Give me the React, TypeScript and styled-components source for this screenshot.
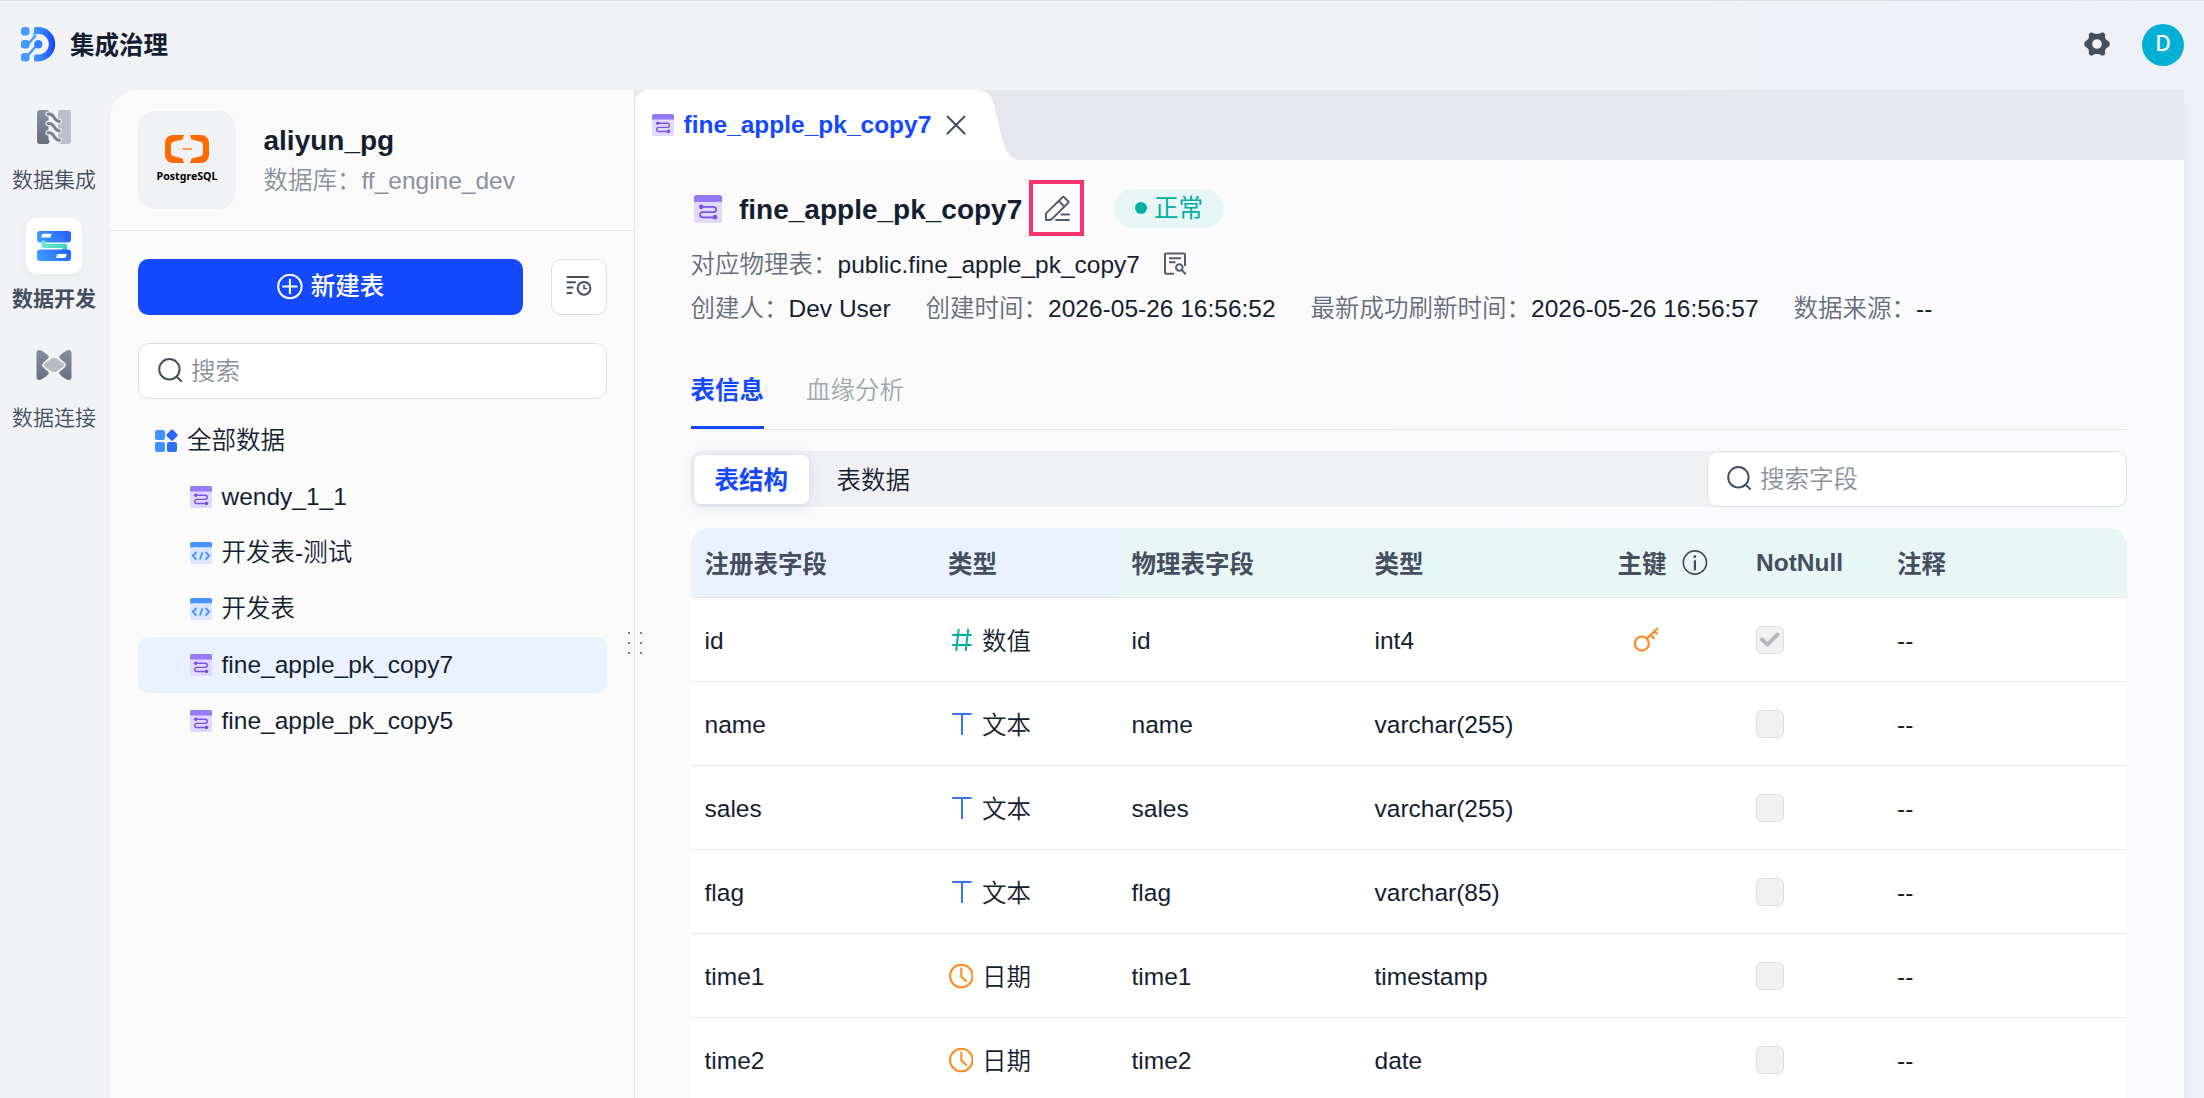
import React from 'react';
import styled, { createGlobalStyle, css } from 'styled-components';

const Global = createGlobalStyle`
  * { box-sizing: border-box; }
  html, body { margin: 0; padding: 0; }
  body {
    width: 2204px;
    height: 1098px;
    overflow: hidden;
    font-family: "Liberation Sans", "Noto Sans CJK SC", sans-serif;
    font-size: 24.5px;
    font-weight: 350;
    color: #141e31;
  }
  svg { display: block; flex: none; }
`;

const Page = styled.div`
  width: 2204px;
  height: 1098px;
  display: flex;
  flex-direction: column;
  overflow: hidden;
  border-top: 1px solid #e0e2e5;
  background: linear-gradient(90deg, #f1f3f7 0%, #f1f3f7 75%, #eef0f8 96%, #edf1f8 100%);
`;

const TopBar = styled.header`
  flex: none;
  height: 89px;
  padding: 0 20px 3px 20px;
  display: flex;
  align-items: center;
`;

const Brand = styled.div`
  margin-left: 14px;
  padding-top: 4px;
  font-weight: 700;
  line-height: 36px;
`;

const TopActions = styled.div`
  margin-left: auto;
  display: flex;
  align-items: center;
  gap: 32px;
`;

const Avatar = styled.div`
  width: 42px;
  height: 42px;
  margin-top: 1px;
  border-radius: 50%;
  background: #00b0d4;
  color: #fff;
  font: 500 21px/40px Inter, "Liberation Sans", sans-serif;
  text-align: center;
`;

const Body = styled.div`
  flex: 1;
  min-height: 0;
  display: flex;
`;

const Nav = styled.nav`
  width: 110px;
  padding: 9px 2px 0 0;
  display: flex;
  flex-direction: column;
  align-items: center;
  gap: 14px;
`;

const NavItem = styled.div`
  display: flex;
  flex-direction: column;
  align-items: center;
`;

const NavIcon = styled.div<{ $active?: boolean }>`
  width: 56px;
  height: 56px;
  border-radius: 10.5px;
  display: grid;
  place-items: center;
  ${p => p.$active && css`
    background: #fff;
    box-shadow: 0 2px 8px rgba(30, 50, 90, 0.05);
  `}
`;

const NavLabel = styled.div<{ $active?: boolean }>`
  height: 49px;
  font-size: 21px;
  line-height: 50px;
  color: #454e5f;
  font-weight: ${p => (p.$active ? 700 : 350)};
`;

const Side = styled.aside`
  position: relative;
  width: 525px;
  flex: none;
  background: #fbfbfc;
  border-top-left-radius: 28px;
  border-right: 1px solid #e3e5ee;
`;

const Handle = styled.div`
  position: absolute;
  left: 518px;
  top: 542px;
  display: grid;
  grid-template-columns: 2px 2px;
  column-gap: 10px;
  row-gap: 7.5px;
  z-index: 2;
`;

const HandleDot = styled.i`
  width: 2.4px;
  height: 2.4px;
  border-radius: 50%;
  background: #4b5363;
`;

const SourceHead = styled.div`
  height: 141px;
  padding: 21px 28px;
  display: flex;
  border-bottom: 1px solid #e3e5ee;
`;

const SourceLogo = styled.div`
  width: 98px;
  height: 98px;
  border-radius: 17.5px;
  background: #f0f2f6;
  display: flex;
  flex-direction: column;
  align-items: center;
  padding-top: 24px;
`;

const SourceLogoName = styled.div`
  margin-top: 5px;
  font: 700 10.6px/17px "Noto Sans", "Open Sans", sans-serif;
  color: #000;
`;

const SourceText = styled.div`
  margin-left: 27.5px;
  padding-top: 11px;
`;

const SourceName = styled.div`
  font-size: 28px;
  line-height: 38px;
  font-weight: 700;
`;

const SourceDb = styled.div`
  line-height: 42px;
  color: #8b919c;
`;

const SideTools = styled.div`
  padding: 28px 27px 0 28px;
  display: flex;
  justify-content: space-between;
`;

const NewButton = styled.div`
  width: 385px;
  height: 56px;
  border-radius: 10.5px;
  background: #1549ff;
  color: #fff;
  font-weight: 500;
  line-height: 52px;
  display: flex;
  align-items: center;
  justify-content: center;
  gap: 8px;
  span { padding-bottom: 1px; }
`;

const SquareButton = styled.div`
  width: 56px;
  height: 56px;
  padding-bottom: 2px;
  border: 1px solid #dadde5;
  border-radius: 10.5px;
  background: #fff;
  display: grid;
  place-items: center;
`;

const SearchBox = styled.div<{ $width: number }>`
  width: ${p => p.$width}px;
  height: 56px;
  padding-left: 17.5px;
  border: 1px solid #dadfe7;
  border-radius: 10.5px;
  background: #fff;
  color: #8b919c;
  display: flex;
  align-items: center;
  gap: 8.5px;
  span { padding-top: 1px; line-height: 36px; }
`;

const SideSearch = styled.div`
  padding: 28px 0 0 28px;
`;

const Tree = styled.div`
  padding: 14px 27px 0 28px;
`;

const TreeRow = styled.div<{ $level: number; $active?: boolean }>`
  height: 56px;
  padding-left: ${p => (p.$level ? 52 : 17)}px;
  border-radius: 10.5px;
  display: flex;
  align-items: center;
  gap: ${p => (p.$level ? 9.5 : 8)}px;
  background: ${p => (p.$active ? '#eaf2ff' : 'transparent')};
`;

const TreeName = styled.span<{ $lift?: boolean }>`
  line-height: 36px;
  padding-bottom: ${p => (p.$lift ? 1 : 0)}px;
`;

const Main = styled.main`
  width: 1549px;
  flex: none;
  display: flex;
  flex-direction: column;
  background: linear-gradient(90deg, #fbfbfc 0%, #fbfbfd 60%, #fafbfd 100%);
  box-shadow: 0 14px 12px rgba(40, 60, 100, 0.04);
`;

const TabBar = styled.div`
  height: 70px;
  flex: none;
  display: flex;
  background: #e6e8ed;
`;

const Tab = styled.div`
  width: 335px;
  padding-left: 17px;
  display: flex;
  align-items: center;
  background: #fff;
  border-top-left-radius: 13px;
`;

const TabName = styled.div`
  margin: 0 15px 0 9.5px;
  line-height: 32px;
  padding-bottom: 1px;
  font-weight: 700;
  color: #1549ff;
`;

const Content = styled.div`
  padding: 20px 57px 0 55.5px;
`;

const TitleRow = styled.div`
  display: flex;
  align-items: center;
  height: 56px;
`;

const TitleIcon = styled.div`
  padding: 2px 0 0 3.5px;
`;

const Title = styled.div`
  margin-left: 17px;
  padding-top: 3px;
  width: 290px;
  font-size: 28px;
  line-height: 53px;
  font-weight: 700;
`;

const EditFrame = styled.div`
  width: 55px;
  height: 56px;
  border: 4px solid #f8346f;
  display: grid;
  place-items: center;
`;

const Status = styled.div`
  margin-left: 30px;
  width: 110px;
  height: 39px;
  border-radius: 20px;
  background: #e8f7f6;
  color: #00aea3;
  font-weight: 400;
  display: flex;
  align-items: center;
  padding-left: 21px;
  gap: 7px;
  line-height: 38px;
  span { padding-top: 2px; }
`;

const StatusDot = styled.i`
  width: 12px;
  height: 12px;
  border-radius: 50%;
  background: #00aea3;
`;

const Meta = styled.div<{ $top?: number; $gap?: number }>`
  display: flex;
  align-items: center;
  height: 44px;
  gap: ${p => p.$gap ?? 35}px;
  margin-top: ${p => p.$top ?? 0}px;
  white-space: nowrap;
`;

const MetaLabel = styled.span`
  color: #666d7b;
`;

const PreviewButton = styled.div`
  padding-top: 4px;
`;

const Tabs = styled.div`
  margin-top: 11px;
  height: 91px;
  display: flex;
  gap: 42px;
  border-bottom: 1px solid #e4e6ea;
`;

const InfoTab = styled.div<{ $active?: boolean }>`
  height: 90px;
  padding-top: 19px;
  line-height: 66px;
  color: ${p => (p.$active ? '#1549ff' : '#a2a7b0')};
  font-weight: ${p => (p.$active ? 700 : 350)};
  border-bottom: 3px solid ${p => (p.$active ? '#1549ff' : 'transparent')};
`;

const Segment = styled.div`
  margin-top: 21px;
  height: 56px;
  padding-left: 3px;
  border-radius: 10.5px;
  background: #f0f1f5;
  display: flex;
  align-items: center;
  gap: 6.5px;
`;

const SegmentItem = styled.div<{ $active?: boolean }>`
  height: 49px;
  padding: 0 21px;
  border-radius: 7px;
  line-height: 51px;
  ${p => p.$active && css`
    background: #fff;
    color: #1549ff;
    font-weight: 700;
    box-shadow: 0 2px 14px rgba(20, 45, 80, 0.12);
  `}
`;

const SegmentEnd = styled.div`
  margin-left: auto;
`;

const Table = styled.div`
  margin-top: 21px;
  background: #fff;
`;

const gridRow = css`
  display: grid;
  grid-template-columns: 243.5px 183.5px 243px 243px 138.5px 141px 1fr;
  border-bottom: 1px solid #e4e6ea;
`;

const HeadRow = styled.div`
  ${gridRow}
  height: 70px;
  border-radius: 17.5px 17.5px 0 0;
  overflow: hidden;
`;

const HeadCell = styled.div<{ $tone: 'blue' | 'green' }>`
  display: flex;
  align-items: center;
  gap: 15.5px;
  padding-left: 14px;
  color: #454e5f;
  font-weight: 700;
  background: ${p => (p.$tone === 'blue' ? '#eaf2ff' : '#e8f7f6')};
`;

const HeadText = styled.span`
  padding-top: 1px;
`;

const Row = styled.div`
  ${gridRow}
  height: 84px;
`;

const Cell = styled.div<{ $indent?: number }>`
  display: flex;
  align-items: center;
  gap: 9px;
  padding: 1px 0 0 ${p => p.$indent ?? 14}px;
`;

const CellText = styled.span`
  padding-top: 1px;
`;

const KindName = styled.span`
  padding-bottom: 2px;
`;

const Check = styled.div`
  width: 28px;
  height: 28px;
  border: 1px solid #dadde7;
  border-radius: 6px;
  background: #f2f2f3;
  display: grid;
  place-items: center;
`;

const Logo = () => (
  <svg width="36" height="36" viewBox="0 0 36 36">
    <defs>
      <linearGradient id="lg" x1="0" x2="1">
        <stop offset="0" stopColor="#479bff" />
        <stop offset="0.45" stopColor="#3381ff" />
        <stop offset="1" stopColor="#1740f5" />
      </linearGradient>
    </defs>
    <path
      fill="url(#lg)"
      d="M15.500 1H18a17.200 17.200 0 0 1 0 34.400h-2.500A1.500 1.500 0 0 1 14 33.900v-3c0-1.800 1.200-2.400 3-2.400h1.500a10.300 10.300 0 1 0-7-17.800c1.500-1.700 2.500-3.200 2.500-5.200v-3A1.500 1.500 0 0 1 15.500 1Z"
    />
    <g fill="#479bff">
      <rect x="1" y="1" width="8.500" height="8.500" rx="3.300" />
      <rect x="1" y="14" width="8.500" height="8.500" rx="3.300" />
      <rect x="1" y="27" width="8.500" height="8.500" rx="3.300" />
    </g>
    <path d="M6 19.300c4.500-1 4.500-6 10-9.500" stroke="#3f93ff" strokeWidth="2.200" fill="none" />
    <path d="M6 30.300c4.500-1.500 6-7.500 12-12" stroke="#3f93ff" strokeWidth="2.200" fill="none" />
    <circle cx="18.300" cy="18.200" r="4.200" fill="#3381ff" />
  </svg>
);

const Gear = () => (
  <svg width="26" height="24" viewBox="0 0 26 24">
    <path
      fill="#454e5f"
      fillRule="evenodd"
      d="M6.200.8c1.100-.7 2.300-.5 3.300.5.900.8 6.100.8 7 0 1-1 2.200-1.200 3.300-.5 1.200.8 1.700 1.900 1.300 3.300-.4 1.600.9 4.100 2.300 4.500 1.500.4 2.300 1.700 2.300 3.400s-.8 3-2.300 3.400c-1.400.4-2.700 2.900-2.300 4.500.4 1.400-.1 2.500-1.300 3.300-1.100.7-2.300.5-3.300-.5-.9-.8-6.100-.8-7 0-1 1-2.200 1.200-3.300.5-1.200-.8-1.700-1.900-1.300-3.300.4-1.600-.9-4.100-2.300-4.500C1.100 15 .3 13.700.3 12s.8-3 2.300-3.400c1.400-.4 2.700-2.900 2.300-4.500C4.500 2.700 5 1.600 6.200.8ZM13 7.200a4.800 4.800 0 1 0 0 9.600 4.800 4.800 0 0 0 0-9.600Z"
    />
  </svg>
);

const IntegrationIcon = () => (
  <svg width="34" height="34" viewBox="0 0 34 34">
    <defs>
      <linearGradient id="ga" x1="0" y1="0" x2="0" y2="1">
        <stop offset="0" stopColor="#8b919d" />
        <stop offset="1" stopColor="#666e7c" />
      </linearGradient>
    </defs>
    <rect x="21" y="0" width="13" height="34" rx="3" fill="#bcc0c9" />
    <path d="M3 0h7.500a2.500 2.500 0 0 1 1 4.500v25a2.500 2.500 0 0 1-1 4.500H3a3 3 0 0 1-3-3V3a3 3 0 0 1 3-3Z" fill="url(#ga)" />
    {[0, 9.4, 18.800].map(y => (
      <g key={y} transform={`translate(0 ${y})`} fill="none" strokeLinecap="round">
        <path d="M11 4h1.500c5.500 0 3.500 7 10 7.500" stroke="#f1f3f7" strokeWidth="5.200" />
        <path d="M11 4h1.500c5.500 0 3.500 7 10 7.500" stroke="#7b828f" strokeWidth="3" />
      </g>
    ))}
  </svg>
);

const DevelopIcon = () => (
  <svg width="34" height="30" viewBox="0 0 34 30">
    <defs>
      <linearGradient id="da" x1="0" y1="0.500" x2="1" y2="0.200">
        <stop offset="0" stopColor="#3f9bff" />
        <stop offset="1" stopColor="#2560ff" />
      </linearGradient>
      <linearGradient id="db" x1="0" x2="1">
        <stop offset="0" stopColor="#6fecd2" />
        <stop offset="1" stopColor="#33d2bd" />
      </linearGradient>
    </defs>
    <rect width="34" height="11.500" rx="3" fill="url(#da)" />
    <path d="M4.500 11.500a2.200 2.200 0 0 1 4.400 0v1.200H28a2.200 2.200 0 0 1 2.200 2.200v4.600h-5v-2.500H6.500a2 2 0 0 1-2-2Z" fill="url(#db)" />
    <rect y="18.500" width="34" height="11.500" rx="3" fill="url(#da)" />
    <path d="M6.500 2.800h8.200l-1.500 3.800H4.200l.6-2.500c.2-.8.800-1.300 1.700-1.300ZM21.500 23h8.200l-.6 2.500c-.2.900-.9 1.400-1.700 1.400h-8.200l.6-2.600c.2-.8.800-1.300 1.700-1.300Z" fill="#fff" />
  </svg>
);

const ConnectIcon = () => (
  <svg width="36" height="30" viewBox="0 0 36 30">
    <defs>
      <linearGradient id="ca" x1="0" y1="0" x2="0" y2="1">
        <stop offset="0" stopColor="#888e9a" />
        <stop offset="1" stopColor="#687080" />
      </linearGradient>
    </defs>
    <path d="M3.500 0C5 0 12 4.500 12.800 6.500 13.500 9 6 12 6 15s7.500 6 6.800 8.500C12 25.500 5 30 3.500 30A3 3 0 0 1 .5 27V3a3 3 0 0 1 3-3ZM32.500 0C31 0 24 4.500 23.200 6.500 22.500 9 30 12 30 15s-7.500 6-6.800 8.500C24 25.500 31 30 32.500 30a3 3 0 0 0 3-3V3a3 3 0 0 0-3-3Z" fill="url(#ca)" />
    <path d="M15.500 8.500q2.500-1.200 5 0l7 5q1.600 1.500 0 3l-7 5q-2.500 1.200-5 0l-7-5q-1.600-1.500 0-3Z" fill="#b6bac3" />
  </svg>
);

const CloudLogo = () => (
  <svg width="44" height="28" viewBox="0 0 44 28">
    <path d="M19 0H8a8 8 0 0 0-8 8v12a8 8 0 0 0 8 8h11l-1.500-4.500-9-2.200Q6 20.700 6 18.500v-9q0-2.200 2.500-2.800l9-2.200ZM25 0h11a8 8 0 0 1 8 8v12a8 8 0 0 1-8 8H25l1.500-4.500 9-2.200q2.500-.6 2.500-2.800v-9q0-2.200-2.500-2.800l-9-2.200Z" fill="#ff6a00" />
    <rect x="17.500" y="13" width="9.500" height="2" fill="#ff9a52" />
  </svg>
);

const PlusCircle = () => (
  <svg width="26" height="26" viewBox="0 0 26 26" fill="none" stroke="#fff" strokeWidth="2.100" strokeLinecap="round">
    <circle cx="12.900" cy="12.500" r="11.700" />
    <path d="M12.900 5.700v13.600M6.100 12.500h13.600" />
  </svg>
);

const ListClock = () => (
  <svg width="26" height="22" viewBox="0 0 26 22" fill="none" stroke="#454e5f" strokeWidth="2" strokeLinecap="round">
    <path d="M1.500 2h20.500M1.500 7.300h7.500M1.500 12.600h5M1.500 17.900h4" />
    <circle cx="18" cy="13.300" r="6.400" />
    <path d="M18 10.200v3.300h2.500" strokeWidth="1.600" />
  </svg>
);

const SearchIcon = () => (
  <svg width="26" height="26" viewBox="0 0 26 26" fill="none" stroke="#454e5f" strokeWidth="2" strokeLinecap="round">
    <circle cx="12.400" cy="11.300" r="10.200" />
    <path d="M19.500 18.500l4.600 4.500" />
  </svg>
);

const AllIcon = () => (
  <svg width="24" height="24" viewBox="0 0 24 24">
    <rect x="0" y="1" width="10" height="10" rx="2" fill="#3f92ff" />
    <rect x="0" y="13" width="10" height="10" rx="2" fill="#3f92ff" />
    <rect x="12" y="13" width="10" height="10" rx="2" fill="#2c70ff" />
    <rect x="12.600" y="1.700" width="8.800" height="8.800" rx="1.600" fill="#2866ff" transform="rotate(45 17 6.100)" />
  </svg>
);

const FlowIcon = ({ size = 22 }: { size?: number }) => (
  <svg width={size} height={size} viewBox="0 0 22 22">
    <rect width="22" height="22" rx="2" fill="#e2d9ff" />
    <path d="M2 0h18a2 2 0 0 1 2 2v3.500H0V2a2 2 0 0 1 2-2Z" fill="#9479f8" />
    <path d="M6 9.300h9.300a2 2 0 0 1 0 4.100H6.800a2 2 0 0 0 0 4.100H16" fill="none" stroke="#7a52e8" strokeWidth="1.400" />
    <circle cx="5.700" cy="9.300" r="1.800" fill="#7a52e8" />
    <circle cx="16.500" cy="17.400" r="1.800" fill="#7a52e8" />
  </svg>
);

const CodeIcon = () => (
  <svg width="22" height="22" viewBox="0 0 22 22">
    <rect width="22" height="22" rx="2" fill="#d8e7ff" />
    <path d="M2 0h18a2 2 0 0 1 2 2v3.200H0V2a2 2 0 0 1 2-2Z" fill="#4a90ff" />
    <path d="M6.500 10l-3.700 3.800 3.700 3.700M15.500 10l3.700 3.800-3.700 3.700M12.400 10.300l-2.500 7.200" fill="none" stroke="#4a90ff" strokeWidth="1.800" />
  </svg>
);

const TabTail = () => (
  <svg width="52" height="70" viewBox="0 0 52 70">
    <path d="M0 0H4C15 0 21 3 23.500 13L33 52C36 64 42 70 52 70H0Z" fill="#fff" />
  </svg>
);

const CloseIcon = () => (
  <svg width="20" height="20" viewBox="0 0 20 20" stroke="#454e5f" strokeWidth="2" strokeLinecap="round">
    <path d="M1.500 1.500l17 17M18.500 1.500l-17 17" />
  </svg>
);

const EditIcon = () => (
  <svg width="26" height="26" viewBox="0 0 26 26" fill="none" stroke="#555d6c" strokeWidth="2" strokeLinejoin="round" strokeLinecap="round">
    <path d="M2 24.900v-6.500L18.500 2.300q.8-.8 1.600 0l4 4q.8.800 0 1.600L8.700 23.200 6.500 24.900Z" />
    <path d="M14.800 6l5.400 5.400M17.500 19.500h7.500M12 24.900H25" />
  </svg>
);

const PreviewIcon = () => (
  <svg width="24" height="24" viewBox="0 0 24 24" fill="none" stroke="#555d6c" strokeWidth="2">
    <path d="M11 21.800H3a1 1 0 0 1-1-1V2.500a1 1 0 0 1 1-1h18a1 1 0 0 1 1 1V14" />
    <path d="M6 6.200h12M6 10.200h6.500" />
    <circle cx="16.300" cy="15.500" r="3.300" />
    <path d="M18.700 18l4 4.300" />
  </svg>
);

const InfoIcon = () => (
  <svg width="26" height="26" viewBox="0 0 26 26">
    <circle cx="12.900" cy="12.500" r="11.600" fill="none" stroke="#454e5f" strokeWidth="1.700" />
    <circle cx="12.900" cy="6.700" r="1.400" fill="#454e5f" />
    <path d="M12.900 11v8.500" stroke="#454e5f" strokeWidth="2.200" strokeLinecap="round" />
  </svg>
);

const KeyIcon = () => (
  <svg width="26" height="26" viewBox="0 0 26 26" fill="none" stroke="#ff8a1f" strokeWidth="2.200">
    <circle cx="8.800" cy="16.500" r="7" />
    <path d="M13.800 11.500L24.800 1M17.500 8l4 3.900M21.300 4.300l3 2.900" />
  </svg>
);

const TickIcon = () => (
  <svg width="20" height="16" viewBox="0 0 20 16" fill="none" stroke="#b6b8be" strokeWidth="4" strokeLinecap="round" strokeLinejoin="round">
    <path d="M2 7.500l5.500 5L17.500 2.500" />
  </svg>
);

type Kind = 'number' | 'text' | 'date';

const KindIcon = ({ kind }: { kind: Kind }) => {
  if (kind === 'number') {
    return (
      <svg width="25" height="25" viewBox="0 0 25 25" fill="none" stroke="#00aea3" strokeWidth="2">
        <path d="M4.200 7h19.500M4.200 17h19.500M10.700 1L8.200 23M20.200 1l-2.500 22" />
      </svg>
    );
  }
  if (kind === 'text') {
    return (
      <svg width="25" height="25" viewBox="0 0 25 25" fill="none" stroke="#3577f0" strokeWidth="2">
        <path d="M4.200 2h19.500M14 2v21" />
      </svg>
    );
  }
  return (
    <svg width="25" height="25" viewBox="0 0 25 25" fill="none" stroke="#ff8a1f" strokeWidth="2" strokeLinecap="round">
      <circle cx="13.300" cy="12" r="11.300" />
      <path d="M13.300 4.500v8l5 4.500" />
    </svg>
  );
};

const kindNames: Record<Kind, string> = { number: '数值', text: '文本', date: '日期' };

const tree = [
  { name: 'wendy_1_1', icon: <FlowIcon /> },
  { name: '开发表-测试', icon: <CodeIcon />, cjk: true },
  { name: '开发表', icon: <CodeIcon />, cjk: true },
  { name: 'fine_apple_pk_copy7', icon: <FlowIcon />, active: true },
  { name: 'fine_apple_pk_copy5', icon: <FlowIcon /> },
];

const fields: { name: string; kind: Kind; type: string; key?: boolean }[] = [
  { name: 'id', kind: 'number', type: 'int4', key: true },
  { name: 'name', kind: 'text', type: 'varchar(255)' },
  { name: 'sales', kind: 'text', type: 'varchar(255)' },
  { name: 'flag', kind: 'text', type: 'varchar(85)' },
  { name: 'time1', kind: 'date', type: 'timestamp' },
  { name: 'time2', kind: 'date', type: 'date' },
];

export default function App() {
  return (
    <>
      <Global />
      <Page>
        <TopBar>
          <Logo />
          <Brand>集成治理</Brand>
          <TopActions>
            <Gear />
            <Avatar>D</Avatar>
          </TopActions>
        </TopBar>
        <Body>
          <Nav>
            <NavItem>
              <NavIcon><IntegrationIcon /></NavIcon>
              <NavLabel>数据集成</NavLabel>
            </NavItem>
            <NavItem>
              <NavIcon $active><DevelopIcon /></NavIcon>
              <NavLabel $active>数据开发</NavLabel>
            </NavItem>
            <NavItem>
              <NavIcon><ConnectIcon /></NavIcon>
              <NavLabel>数据连接</NavLabel>
            </NavItem>
          </Nav>
          <Side>
            <SourceHead>
              <SourceLogo>
                <CloudLogo />
                <SourceLogoName>PostgreSQL</SourceLogoName>
              </SourceLogo>
              <SourceText>
                <SourceName>aliyun_pg</SourceName>
                <SourceDb>数据库：ff_engine_dev</SourceDb>
              </SourceText>
            </SourceHead>
            <SideTools>
              <NewButton><PlusCircle /><span>新建表</span></NewButton>
              <SquareButton><ListClock /></SquareButton>
            </SideTools>
            <SideSearch>
              <SearchBox $width={469}><SearchIcon /><span>搜索</span></SearchBox>
            </SideSearch>
            <Tree>
              <TreeRow $level={0}><AllIcon /><TreeName $lift>全部数据</TreeName></TreeRow>
              {tree.map(t => (
                <TreeRow key={t.name} $level={1} $active={t.active}>
                  {t.icon}
                  <TreeName $lift={t.cjk}>{t.name}</TreeName>
                </TreeRow>
              ))}
            </Tree>
            <Handle>
              {[0, 1, 2, 3, 4, 5].map(i => <HandleDot key={i} />)}
            </Handle>
          </Side>
          <Main>
            <TabBar>
              <Tab>
                <FlowIcon />
                <TabName>fine_apple_pk_copy7</TabName>
                <CloseIcon />
              </Tab>
              <TabTail />
            </TabBar>
            <Content>
              <TitleRow>
                <TitleIcon><FlowIcon size={28} /></TitleIcon>
                <Title>fine_apple_pk_copy7</Title>
                <EditFrame><EditIcon /></EditFrame>
                <Status><StatusDot /><span>正常</span></Status>
              </TitleRow>
              <Meta $top={4} $gap={23}>
                <span><MetaLabel>对应物理表：</MetaLabel>public.fine_apple_pk_copy7</span>
                <PreviewButton><PreviewIcon /></PreviewButton>
              </Meta>
              <Meta>
                <span><MetaLabel>创建人：</MetaLabel>Dev User</span>
                <span><MetaLabel>创建时间：</MetaLabel>2026-05-26 16:56:52</span>
                <span><MetaLabel>最新成功刷新时间：</MetaLabel>2026-05-26 16:56:57</span>
                <span><MetaLabel>数据来源：</MetaLabel>--</span>
              </Meta>
              <Tabs>
                <InfoTab $active>表信息</InfoTab>
                <InfoTab>血缘分析</InfoTab>
              </Tabs>
              <Segment>
                <SegmentItem $active>表结构</SegmentItem>
                <SegmentItem>表数据</SegmentItem>
                <SegmentEnd>
                  <SearchBox $width={420}><SearchIcon /><span>搜索字段</span></SearchBox>
                </SegmentEnd>
              </Segment>
              <Table>
                <HeadRow>
                  <HeadCell $tone="blue">注册表字段</HeadCell>
                  <HeadCell $tone="blue">类型</HeadCell>
                  <HeadCell $tone="green">物理表字段</HeadCell>
                  <HeadCell $tone="green">类型</HeadCell>
                  <HeadCell $tone="green">主键<InfoIcon /></HeadCell>
                  <HeadCell $tone="green"><HeadText>NotNull</HeadText></HeadCell>
                  <HeadCell $tone="green">注释</HeadCell>
                </HeadRow>
                {fields.map(f => (
                  <Row key={f.name}>
                    <Cell><CellText>{f.name}</CellText></Cell>
                    <Cell><KindIcon kind={f.kind} /><KindName>{kindNames[f.kind]}</KindName></Cell>
                    <Cell><CellText>{f.name}</CellText></Cell>
                    <Cell><CellText>{f.type}</CellText></Cell>
                    <Cell $indent={29}>{f.key && <KeyIcon />}</Cell>
                    <Cell $indent={13.5}><Check>{f.key && <TickIcon />}</Check></Cell>
                    <Cell><CellText>--</CellText></Cell>
                  </Row>
                ))}
              </Table>
            </Content>
          </Main>
        </Body>
      </Page>
    </>
  );
}
